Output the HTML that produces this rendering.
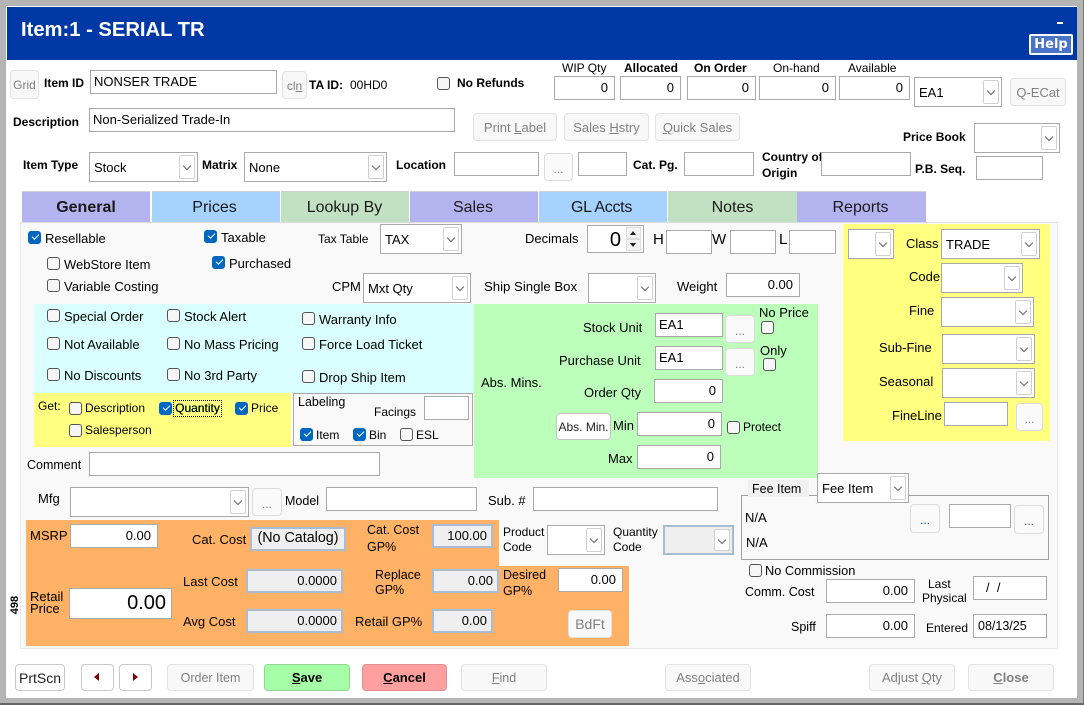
<!DOCTYPE html>
<html><head><meta charset="utf-8"><title>Item</title>
<style>
html,body{margin:0;padding:0;background:#fff}
#w{position:relative;width:1084px;height:705px;overflow:hidden;background:#fff;font:13px "Liberation Sans",sans-serif;color:#000}
#w div,#w span.x{box-sizing:border-box}
.a{position:absolute}
.t{position:absolute;white-space:nowrap;line-height:18px;height:16px}
.u{font-size:12px;font-weight:bold;line-height:16px}
.n{font-size:12px;line-height:16px}
.i{position:absolute;background:#fff;border:1px solid #a9a9a9;height:24px;line-height:22px;padding:0 3px;white-space:nowrap;font-size:13px}
.r{text-align:right;padding-right:6px}
.g{background:#efefef;border:2px solid #a9bcd6;line-height:20px;padding-right:4px}
.s{position:absolute;background:#fff;border:1px solid #a9a9a9;height:30px;line-height:30px;padding-left:4px;font-size:13px;white-space:nowrap}
.s::after{content:"";position:absolute;right:2px;top:2px;bottom:2px;width:16px;border:1px solid #d0d0d0;border-radius:2px;background:#fff;box-sizing:border-box}
.s::before{content:"";position:absolute;right:7px;top:10px;width:5px;height:5px;border-right:1px solid #666;border-bottom:1px solid #666;transform:rotate(45deg);z-index:2}
.b{position:absolute;background:#f8f8f8;border:1px solid #e2e2e2;border-radius:4px;text-align:center;color:#808080;font-size:13px;white-space:nowrap;box-sizing:border-box}
.w{background:#fff;border-color:#c4c4c4;color:#000}
.d{background:#fafafa;border:1px solid #dcdcdc;border-radius:4px;color:#777;text-align:center;position:absolute;height:28px;line-height:31px;font-size:12px;box-sizing:border-box}
.c{position:absolute;width:13px;height:13px;border:1px solid #555;border-radius:3px;background:#f6f6f6;box-sizing:border-box}
.o{background:#0067c0;border-color:#0067c0}
.o::after{content:"";position:absolute;left:3px;top:2px;width:6px;height:3px;border-left:1px solid #fff;border-bottom:1px solid #fff;transform:rotate(-45deg)}
.tab{position:absolute;top:191px;height:31px;line-height:31px;text-align:center;font-size:16px;color:#1a1a1a;border-top:1px solid #d0d0d0;box-sizing:border-box}
u{text-decoration:underline}
</style></head><body><div id="w">
<!-- frame -->
<div class="a" style="left:0;top:0;width:1084px;height:705px;background:#b4b4b4;border-right:1px solid #777;border-bottom:2px solid #666"></div>
<div class="a" style="left:6px;top:6px;width:1071px;height:692px;background:#fff"></div>
<div class="a" style="left:7px;top:7px;width:1070px;height:53px;background:#0039a6"></div>
<div class="t" style="left:21px;top:18px;height:24px;line-height:24px;font-size:20.2px;font-weight:bold;color:#fff">Item:1 - SERIAL TR</div>
<div class="a" style="left:1057px;top:22px;width:6px;height:2px;background:#fff"></div>
<div class="a" style="left:1029px;top:34px;width:44px;height:21px;background:#4a74c8;border:2px solid #fff;border-radius:2px;color:#fff;font:bold 13px/17px 'DejaVu Sans',sans-serif;text-align:center">Help</div>

<!-- header -->
<div class="b" style="left:10px;top:70px;width:29px;height:29px;line-height:29px;font-size:12px">Grid</div>
<div class="t u" style="left:44px;top:75px">Item ID</div>
<div class="i" style="left:90px;top:70px;width:187px">NONSER TRADE</div>
<div class="b" style="left:282px;top:71px;width:25px;height:28px;line-height:28px;font-size:12px">cl<u>n</u></div>
<div class="t u" style="left:309px;top:77px">TA ID:</div>
<div class="t n" style="left:350px;top:77px">00HD0</div>
<div class="c" style="left:437px;top:77px"></div>
<div class="t u" style="left:457px;top:75px">No Refunds</div>
<div class="t n" style="left:562px;top:60px">WIP Qty</div>
<div class="t u" style="left:624px;top:60px">Allocated</div>
<div class="t u" style="left:694px;top:60px">On Order</div>
<div class="t n" style="left:773px;top:60px">On-hand</div>
<div class="t n" style="left:848px;top:60px">Available</div>
<div class="i r" style="left:554px;top:76px;width:61px">0</div>
<div class="i r" style="left:620px;top:76px;width:61px">0</div>
<div class="i r" style="left:687px;top:76px;width:69px">0</div>
<div class="i r" style="left:759px;top:76px;width:77px">0</div>
<div class="i r" style="left:839px;top:76px;width:71px">0</div>
<div class="s" style="left:914px;top:77px;width:88px">EA1</div>
<div class="b" style="left:1010px;top:78px;width:56px;height:28px;line-height:27px">Q-ECat</div>
<div class="t u" style="left:13px;top:114px">Description</div>
<div class="i" style="left:89px;top:108px;width:366px">Non-Serialized Trade-In</div>
<div class="b" style="left:473px;top:113px;width:84px;height:28px;line-height:27px">Print <u>L</u>abel</div>
<div class="b" style="left:564px;top:113px;width:85px;height:28px;line-height:27px">Sales <u>H</u>stry</div>
<div class="b" style="left:655px;top:113px;width:85px;height:28px;line-height:27px"><u>Q</u>uick Sales</div>
<div class="t u" style="left:903px;top:129px">Price Book</div>
<div class="s" style="left:974px;top:123px;width:86px"></div>
<div class="t u" style="left:23px;top:157px">Item Type</div>
<div class="s" style="left:89px;top:152px;width:109px">Stock</div>
<div class="t u" style="left:202px;top:157px">Matrix</div>
<div class="s" style="left:244px;top:152px;width:143px">None</div>
<div class="t u" style="left:396px;top:157px">Location</div>
<div class="i" style="left:454px;top:152px;width:85px"></div>
<div class="d" style="left:544px;top:153px;width:29px">...</div>
<div class="i" style="left:578px;top:152px;width:49px"></div>
<div class="t u" style="left:633px;top:157px">Cat. Pg.</div>
<div class="i" style="left:684px;top:152px;width:70px"></div>
<div class="t u" style="left:762px;top:149px">Country of</div>
<div class="t u" style="left:762px;top:165px">Origin</div>
<div class="i" style="left:821px;top:152px;width:90px"></div>
<div class="t u" style="left:915px;top:161px">P.B. Seq.</div>
<div class="i" style="left:976px;top:156px;width:67px"></div>

<!-- tabs -->
<div class="tab" style="left:22px;width:128px;background:#b3b3f0;font-weight:bold">General</div>
<div class="tab" style="left:152px;width:128px;background:#a6d2ff;padding-right:3px">Prices</div>
<div class="tab" style="left:281px;width:128px;background:#c2e0c2;padding-right:1px">Lookup By</div>
<div class="tab" style="left:410px;width:128px;background:#b3b3f0;padding-right:2px">Sales</div>
<div class="tab" style="left:539px;width:128px;background:#a6d2ff;padding-right:3px;letter-spacing:-.3px">GL Accts</div>
<div class="tab" style="left:668px;width:129px;background:#c2e0c2">Notes</div>
<div class="tab" style="left:797px;width:129px;background:#b3b3f0;padding-right:2px">Reports</div>
<!-- panel -->
<div class="a" style="left:20px;top:222px;width:1038px;height:427px;background:#f9f9f9;border:1px solid #e8e8e8;border-top-color:#dcdcdc"></div>
<div class="a" style="left:34px;top:304px;width:440px;height:89px;background:#d9ffff"></div>
<div class="a" style="left:474px;top:304px;width:344px;height:174px;background:#bbffbb"></div>
<div class="a" style="left:34px;top:393px;width:257px;height:54px;background:#ffff80"></div>
<div class="a" style="left:293px;top:393px;width:180px;height:53px;border:1px solid #a9a9a9"></div>
<div class="a" style="left:843px;top:224px;width:207px;height:217px;background:#ffff80"></div>
<div class="a" style="left:26px;top:520px;width:473px;height:46px;background:#ffb266"></div>
<div class="a" style="left:26px;top:566px;width:603px;height:80px;background:#ffb266"></div>

<!-- general left -->
<div class="c o" style="left:28px;top:231px"></div><div class="t" style="left:45px;top:230px">Resellable</div>
<div class="c o" style="left:204px;top:230px"></div><div class="t" style="left:221px;top:229px">Taxable</div>
<div class="t n" style="left:318px;top:231px">Tax Table</div>
<div class="s" style="left:380px;top:224px;width:82px">TAX</div>
<div class="c o" style="left:212px;top:256px"></div><div class="t" style="left:229px;top:255px">Purchased</div>
<div class="c" style="left:47px;top:257px"></div><div class="t" style="left:64px;top:256px">WebStore Item</div>
<div class="c" style="left:47px;top:279px"></div><div class="t" style="left:64px;top:278px">Variable Costing</div>
<div class="t" style="left:332px;top:278px">CPM</div>
<div class="s" style="left:363px;top:273px;width:108px">Mxt Qty</div>
<div class="c" style="left:47px;top:309px"></div><div class="t" style="left:64px;top:308px">Special Order</div>
<div class="c" style="left:167px;top:309px"></div><div class="t" style="left:184px;top:308px">Stock Alert</div>
<div class="c" style="left:302px;top:312px"></div><div class="t" style="left:319px;top:311px">Warranty Info</div>
<div class="c" style="left:47px;top:337px"></div><div class="t" style="left:64px;top:336px">Not Available</div>
<div class="c" style="left:167px;top:337px"></div><div class="t" style="left:184px;top:336px">No Mass Pricing</div>
<div class="c" style="left:302px;top:337px"></div><div class="t" style="left:319px;top:336px">Force Load Ticket</div>
<div class="c" style="left:47px;top:368px"></div><div class="t" style="left:64px;top:367px">No Discounts</div>
<div class="c" style="left:167px;top:368px"></div><div class="t" style="left:184px;top:367px">No 3rd Party</div>
<div class="c" style="left:302px;top:370px"></div><div class="t" style="left:319px;top:369px">Drop Ship Item</div>
<div class="t n" style="left:38px;top:398px">Get:</div>
<div class="c" style="left:69px;top:402px"></div><div class="t n" style="left:85px;top:400px">Description</div>
<div class="c o" style="left:159px;top:402px"></div>
<div class="t u" style="left:173px;top:400px;height:17px;border:1px dotted #000;padding:0 1px;line-height:15px;font-weight:normal;text-shadow:.4px 0 0 #060">Quantity</div>
<div class="c o" style="left:235px;top:402px"></div><div class="t n" style="left:251px;top:400px">Price</div>
<div class="c" style="left:69px;top:424px"></div><div class="t n" style="left:85px;top:422px">Salesperson</div>
<div class="t n" style="left:298px;top:394px;font-size:12.5px">Labeling</div>
<div class="t n" style="left:374px;top:404px">Facings</div>
<div class="i" style="left:424px;top:396px;width:45px"></div>
<div class="c o" style="left:300px;top:428px"></div><div class="t n" style="left:316px;top:427px">Item</div>
<div class="c o" style="left:353px;top:428px"></div><div class="t n" style="left:369px;top:427px">Bin</div>
<div class="c" style="left:400px;top:428px"></div><div class="t n" style="left:416px;top:427px">ESL</div>
<div class="t" style="left:27px;top:457px;font-size:12.5px;line-height:16px">Comment</div>
<div class="i" style="left:89px;top:452px;width:291px"></div>

<!-- general right -->
<div class="t" style="left:525px;top:230px">Decimals</div>
<div class="i" style="left:587px;top:225px;width:57px;height:28px;font-size:20px;line-height:28px;padding-left:0"><span style="position:absolute;left:0;width:33px;text-align:right">0</span></div>
<div class="a" style="left:626px;top:227px;width:15px;height:12px;border:1px solid #ddd;background:#f4f4f4"></div>
<div class="a" style="left:626px;top:239px;width:15px;height:12px;border:1px solid #ddd;background:#f4f4f4"></div>
<div class="a" style="left:630px;top:231px;border:3px solid transparent;border-top:0;border-bottom:4px solid #222"></div>
<div class="a" style="left:630px;top:243px;border:3px solid transparent;border-bottom:0;border-top:4px solid #222"></div>
<div class="t" style="left:653px;top:231px;font-size:15px">H</div>
<div class="i" style="left:666px;top:230px;width:46px"></div>
<div class="t" style="left:712px;top:231px;font-size:15px">W</div>
<div class="i" style="left:730px;top:230px;width:46px"></div>
<div class="t" style="left:779px;top:231px;font-size:15px">L</div>
<div class="i" style="left:789px;top:230px;width:47px"></div>
<div class="t" style="left:484px;top:278px;font-size:13.2px">Ship Single Box</div>
<div class="s" style="left:588px;top:273px;width:68px"></div>
<div class="t" style="left:677px;top:278px">Weight</div>
<div class="i r" style="left:726px;top:273px;width:74px">0.00</div>
<div class="s" style="left:848px;top:229px;width:46px"></div>
<div class="t" style="left:906px;top:235px">Class</div>
<div class="s" style="left:941px;top:229px;width:99px">TRADE</div>
<div class="t" style="left:909px;top:268px">Code</div>
<div class="s" style="left:941px;top:263px;width:82px"></div>
<div class="t" style="left:909px;top:302px">Fine</div>
<div class="s" style="left:941px;top:297px;width:93px"></div>
<div class="t" style="left:879px;top:339px">Sub-Fine</div>
<div class="s" style="left:942px;top:334px;width:93px"></div>
<div class="t" style="left:879px;top:373px">Seasonal</div>
<div class="s" style="left:942px;top:368px;width:93px"></div>
<div class="t" style="left:892px;top:407px">FineLine</div>
<div class="i" style="left:944px;top:402px;width:64px"></div>
<div class="d" style="left:1016px;top:403px;width:27px">...</div>

<!-- green -->
<div class="t" style="left:583px;top:319px">Stock Unit</div>
<div class="i" style="left:655px;top:313px;width:68px">EA1</div>
<div class="d w" style="left:725px;top:315px;width:30px">...</div>
<div class="t" style="left:759px;top:304px">No Price</div>
<div class="c" style="left:761px;top:321px"></div>
<div class="t" style="left:559px;top:352px">Purchase Unit</div>
<div class="i" style="left:655px;top:346px;width:68px">EA1</div>
<div class="d w" style="left:725px;top:348px;width:30px">...</div>
<div class="t" style="left:760px;top:342px">Only</div>
<div class="c" style="left:763px;top:358px"></div>
<div class="t" style="left:481px;top:374px">Abs. Mins.</div>
<div class="t" style="left:584px;top:384px">Order Qty</div>
<div class="i r" style="left:654px;top:379px;width:69px">0</div>
<div class="b w" style="left:556px;top:413px;width:55px;height:27px;line-height:26px;font-size:12px;color:#222">Abs. Min.</div>
<div class="t" style="left:613px;top:417px">Min</div>
<div class="i r" style="left:637px;top:412px;width:85px">0</div>
<div class="c" style="left:727px;top:421px"></div><div class="t n" style="left:743px;top:419px">Protect</div>
<div class="t" style="left:608px;top:450px">Max</div>
<div class="i r" style="left:637px;top:445px;width:84px">0</div>

<!-- bottom -->
<div class="t" style="left:38px;top:490px">Mfg</div>
<div class="s" style="left:70px;top:487px;width:179px"></div>
<div class="d" style="left:252px;top:488px;width:30px">...</div>
<div class="t" style="left:285px;top:493px;font-size:12.5px;line-height:16px">Model</div>
<div class="i" style="left:326px;top:487px;width:151px"></div>
<div class="t" style="left:488px;top:492px">Sub. #</div>
<div class="i" style="left:533px;top:487px;width:185px"></div>

<div class="t" style="left:30px;top:527px">MSRP</div>
<div class="i r" style="left:70px;top:524px;width:88px">0.00</div>
<div class="t" style="left:192px;top:531px">Cat. Cost</div>
<div class="i g" style="left:250px;top:527px;width:96px;font-size:14.3px;text-align:center;padding:0;line-height:18px">(No Catalog)</div>
<div class="t" style="left:367px;top:521px;font-size:12.5px">Cat. Cost</div>
<div class="t" style="left:367px;top:538px;font-size:12.5px">GP%</div>
<div class="i g r" style="left:432px;top:524px;width:61px">100.00</div>
<div class="t n" style="left:503px;top:524px">Product</div>
<div class="t n" style="left:503px;top:539px">Code</div>
<div class="s" style="left:547px;top:525px;width:58px"></div>
<div class="t n" style="left:613px;top:524px">Quantity</div>
<div class="t n" style="left:613px;top:539px">Code</div>
<div class="s" style="left:663px;top:525px;width:71px;background:#efefef;border:2px solid #a9bcd6"></div>
<div class="t" style="left:30px;top:589px;line-height:15px">Retail</div>
<div class="t" style="left:30px;top:601px;line-height:15px">Price</div>
<div class="i r" style="left:69px;top:588px;width:103px;height:31px;font-size:20px;line-height:29px;padding-right:5px">0.00</div>
<div class="t" style="left:183px;top:573px">Last Cost</div>
<div class="i g r" style="left:246px;top:569px;width:97px">0.0000</div>
<div class="t" style="left:183px;top:613px">Avg Cost</div>
<div class="i g r" style="left:246px;top:609px;width:97px">0.0000</div>
<div class="t" style="left:375px;top:566px;font-size:12.5px">Replace</div>
<div class="t" style="left:375px;top:581px;font-size:12.5px">GP%</div>
<div class="i g r" style="left:432px;top:569px;width:67px">0.00</div>
<div class="t" style="left:355px;top:613px">Retail GP%</div>
<div class="i g r" style="left:432px;top:609px;width:61px">0.00</div>
<div class="t" style="left:503px;top:566px;font-size:12.5px">Desired</div>
<div class="t" style="left:503px;top:582px;font-size:12.5px">GP%</div>
<div class="i r" style="left:558px;top:568px;width:65px">0.00</div>
<div class="b" style="left:568px;top:610px;width:44px;height:28px;line-height:27px;font-size:14px">BdFt</div>
<div class="t" style="left:5px;top:597px;width:20px;text-align:center;font:bold 11px/16px 'Liberation Sans',sans-serif;transform:rotate(-90deg)">498</div>

<!-- fee -->
<div class="a" style="left:741px;top:495px;width:308px;height:65px;border:1px solid #a0a0a0"></div>
<div class="t" style="left:748px;top:480px;width:61px;height:17px;background:#f0f0f0;padding-left:4px;font-size:12.5px">Fee Item</div>
<div class="s" style="left:817px;top:473px;width:92px;line-height:29px">Fee Item</div>
<div class="t" style="left:745px;top:509px">N/A</div>
<div class="t" style="left:746px;top:534px">N/A</div>
<div class="d w" style="left:910px;top:504px;width:30px;height:29px;color:#0067c0;background:#f9f9f9">...</div>
<div class="i" style="left:949px;top:504px;width:62px"></div>
<div class="d w" style="left:1014px;top:505px;width:30px;height:29px;color:#555;background:#f9f9f9">...</div>
<div class="c" style="left:749px;top:564px"></div><div class="t n" style="left:765px;top:563px;font-size:12.8px">No Commission</div>
<div class="t" style="left:745px;top:583px;font-size:12.5px">Comm. Cost</div>
<div class="i r" style="left:826px;top:579px;width:89px">0.00</div>
<div class="t n" style="left:928px;top:576px">Last</div>
<div class="t n" style="left:922px;top:590px">Physical</div>
<div class="i" style="left:973px;top:576px;width:74px;padding-left:12px">/&nbsp;&nbsp;/</div>
<div class="t" style="left:791px;top:618px;font-size:12.5px">Spiff</div>
<div class="i r" style="left:826px;top:614px;width:89px">0.00</div>
<div class="t n" style="left:926px;top:620px">Entered</div>
<div class="i" style="left:973px;top:614px;width:74px;padding-left:4px;font-size:12.5px">08/13/25</div>

<!-- footer -->
<div class="b w" style="left:15px;top:664px;width:50px;height:27px;line-height:26px;font-size:14px;color:#222;border-color:#c8c8c8">PrtScn</div>
<div class="b w" style="left:81px;top:664px;width:33px;height:27px;border-color:#c8c8c8"></div>
<div class="a" style="left:94px;top:673px;border:4.5px solid transparent;border-left:0;border-right:5px solid #7a0000"></div>
<div class="b w" style="left:119px;top:664px;width:33px;height:27px;border-color:#c8c8c8"></div>
<div class="a" style="left:133px;top:673px;border:4.5px solid transparent;border-right:0;border-left:5px solid #7a0000"></div>
<div class="b" style="left:167px;top:664px;width:87px;height:27px;line-height:26px;font-size:12.5px">Order Item</div>
<div class="b" style="left:264px;top:664px;width:86px;height:27px;line-height:26px;background:#a6ffa6;border-color:#90d890;color:#000;font-weight:bold"><u>S</u>ave</div>
<div class="b" style="left:362px;top:664px;width:85px;height:27px;line-height:26px;background:#ff9f9f;border-color:#e09090;color:#000;font-weight:bold"><u>C</u>ancel</div>
<div class="b" style="left:461px;top:664px;width:86px;height:27px;line-height:26px;font-size:12.5px"><u>F</u>ind</div>
<div class="b" style="left:665px;top:664px;width:86px;height:27px;line-height:26px">Ass<u>o</u>ciated</div>
<div class="b" style="left:869px;top:664px;width:86px;height:27px;line-height:26px">Adjust <u>Q</u>ty</div>
<div class="b" style="left:968px;top:664px;width:86px;height:27px;line-height:26px;font-weight:bold"><u>C</u>lose</div>
</div></body></html>
